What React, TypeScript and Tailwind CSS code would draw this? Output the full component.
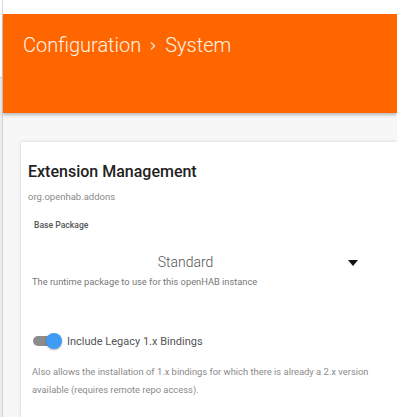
import React from 'react';

const App: React.FC = () => {
  return (
    <div className="w-[397px] h-[417px] overflow-hidden bg-white flex flex-col font-['Roboto','Liberation_Sans',sans-serif]">
      <div className="h-[14px] shrink-0 flex">
        <div className="w-[3px] border-r border-[#d8d8d8]"></div>
      </div>
      <div className="flex flex-1 min-h-0">
        {/* left rail */}
        <div className="w-[3px] shrink-0 flex flex-col border-r border-[#d4d4d4]">
          <div className="h-[63px] bg-white"></div>
          <div className="flex-1 bg-[#ececec] border-t border-[#cfcfcf]"></div>
        </div>

        <div className="flex-1 flex flex-col min-w-0 bg-[#f7f7f7]">
          {/* header */}
          <div className="h-[99px] shrink-0 bg-[#ff6600] shadow-[0_2px_3px_rgba(0,0,0,0.25)] relative z-10 pt-[19px] pl-[20px]">
            <div className="flex items-center text-[20px] leading-[24px] text-[#fff3e6] font-light">
              <span>Configuration</span>
              <svg width="8" height="10" viewBox="0 0 8 10" className="mx-[8px] mt-[2px]">
                <path d="M2 1.5 L5.5 5 L2 8.5" stroke="#f3d3bd" strokeWidth="1.6" fill="none" />
              </svg>
              <span>System</span>
            </div>
          </div>

          {/* content */}
          <div className="flex-1 pt-[29px] pl-[18px]">
            <div className="bg-white h-full shadow-[0_0_3px_rgba(0,0,0,0.18)] pl-[7px] pt-[20px] pr-[20px]">
              <h2 className="text-[16px] leading-[19px] font-medium text-[#222]">Extension Management</h2>
              <div className="mt-[10px] text-[9.5px] leading-[12px] text-[#8a8a8a]">org.openhab.addons</div>

              <div className="mt-[17px] pl-[6px] text-[8.6px] leading-[10px] font-medium text-[#555]">Base Package</div>

              <div className="mt-[24px] flex items-center pl-[4px]">
                <div className="w-[307px] text-center text-[14px] leading-[17px] text-[#555] font-light">Standard</div>
                <svg width="10" height="6" viewBox="0 0 10 6" className="ml-[9px]">
                  <path d="M0 0 L10 0 L5 6 Z" fill="#111" />
                </svg>
              </div>
              <div className="mt-[5px] pl-[4px] text-[9.3px] leading-[12px] text-[#777]">
                The runtime package to use for this openHAB instance
              </div>

              <div className="mt-[45px] pl-[5px] flex items-center">
                <div className="relative w-[29px] h-[16px] flex items-center">
                  <div className="w-[26px] h-[10px] rounded-full bg-[#8c8c8c]"></div>
                  <div className="absolute right-0 top-0 w-[16px] h-[16px] rounded-full bg-[#3f9cf5] shadow-[0_1px_2px_rgba(0,0,0,0.3)]"></div>
                </div>
                <span className="ml-[5px] text-[11px] leading-[13px] text-[#555]">Include Legacy 1.x Bindings</span>
              </div>

              <div className="mt-[14px] pl-[4px] text-[9.4px] leading-[18px] text-[#8a8a8a]">
                Also allows the installation of 1.x bindings for which there is already a 2.x version available (requires remote repo access).
              </div>
            </div>
          </div>
        </div>
      </div>
    </div>
  );
};

export default App;
